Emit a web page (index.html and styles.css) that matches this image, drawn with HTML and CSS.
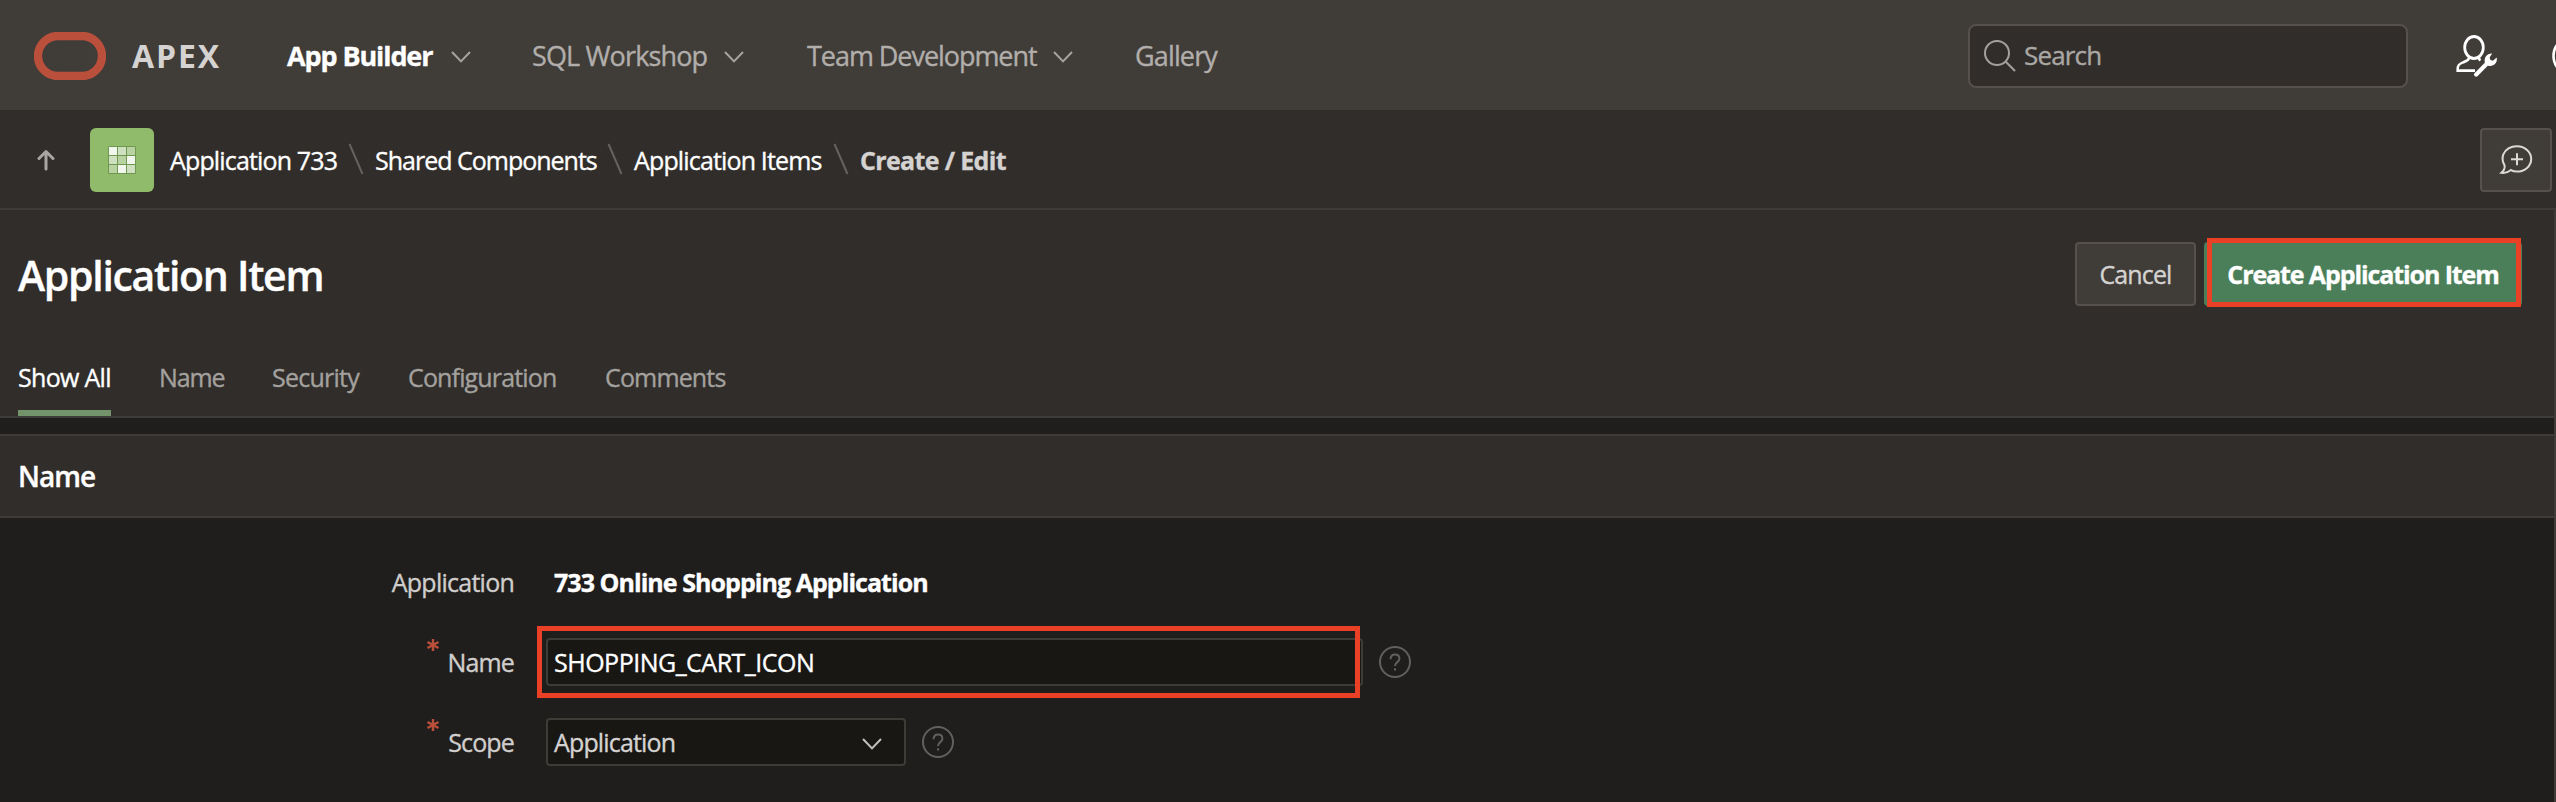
FILE: index.html
```
<!DOCTYPE html>
<html lang="en">
<head>
<meta charset="utf-8">
<title>Application Item</title>
<link rel="stylesheet" href="styles.css">
</head>
<body>
<header class="topbar">
  <svg class="logo" width="72" height="48" viewBox="0 0 72 48"><rect x="4" y="4" width="64" height="40" rx="20" fill="none" stroke="#ba4f3b" stroke-width="8.4"/></svg>
  <span class="brand">APEX</span>
  <nav class="menu">
    <a class="menu-item active m-builder"><span>App Builder</span><svg class="chev" width="20" height="12" viewBox="0 0 20 12"><path d="M1 1l9 9.4L19 1"/></svg></a>
    <a class="menu-item m-sql"><span>SQL Workshop</span><svg class="chev" width="20" height="12" viewBox="0 0 20 12"><path d="M1 1l9 9.4L19 1"/></svg></a>
    <a class="menu-item m-team"><span>Team Development</span><svg class="chev" width="20" height="12" viewBox="0 0 20 12"><path d="M1 1l9 9.4L19 1"/></svg></a>
    <a class="menu-item"><span>Gallery</span></a>
  </nav>
  <div class="search">
    <svg width="32" height="32" viewBox="0 0 32 32" fill="none" stroke="#a3a19e" stroke-width="2"><circle cx="13" cy="13" r="12"/><path d="M21.8 21.8L31 31"/></svg>
    <span>Search</span>
  </div>
  <svg class="admin" width="42" height="42" viewBox="0 0 42 42" fill="none" stroke="#fff">
    <ellipse cx="18" cy="12.500" rx="9.300" ry="11" stroke-width="2.800"/>
    <path d="M13.500 22c-.5 3.500-3.500 4.200-6.500 5.400-3.700 1.500-5.300 2.600-5.300 6V35.600H19M22.500 22c.2 1.500.7 2.500 2 3.400" stroke-width="2.600"/>
    <path d="M20.200 39.400L32 27.600" stroke-width="4.200" stroke-linecap="round"/>
    <path d="M36.200 18.400l-2.600 4.200.8 2.400 2.500.8 3.800-3.300c1.100 5.600-3 9.400-8.600 8.300l-3.200-3c-1.200-5.200 2-9.800 7.300-9.400z" fill="#fff" stroke="none"/>
  </svg>
  <svg class="help-edge" width="4" height="42" viewBox="0 0 4 42"><circle cx="21" cy="21" r="19.500" fill="none" stroke="#fff" stroke-width="2.600"/></svg>
</header>

<div class="crumbbar">
  <svg class="up" width="18" height="22" viewBox="0 0 18 22" fill="none" stroke="#a8a6a3" stroke-width="3" stroke-linecap="round" stroke-linejoin="round"><path d="M9 20V2.500M2 9.500l7-7 7 7"/></svg>
  <div class="app-icon">
    <svg width="28" height="28" viewBox="0 0 28 28"><rect width="28" height="28" rx="1.500" fill="#709750"/><g fill="#f2f7ee"><rect x="1" y="1" width="8" height="8"/><rect x="19" y="10" width="8" height="8"/><rect x="10" y="19" width="8" height="8"/></g><g fill="#cfe0c0"><rect x="10" y="1" width="8" height="8"/><rect x="1" y="10" width="8" height="8"/><rect x="19" y="19" width="8" height="8"/></g><g fill="#b8d3a1"><rect x="19" y="1" width="8" height="8"/><rect x="10" y="10" width="8" height="8"/><rect x="1" y="19" width="8" height="8"/></g></svg>
  </div>
  <span class="crumb c-app">Application 733</span>
  <svg class="sep" width="16" height="32" viewBox="0 0 16 32"><path d="M1.500 1l13 30"/></svg>
  <span class="crumb c-shared">Shared Components</span>
  <svg class="sep" width="16" height="32" viewBox="0 0 16 32"><path d="M1.500 1l13 30"/></svg>
  <span class="crumb c-items">Application Items</span>
  <svg class="sep" width="16" height="32" viewBox="0 0 16 32"><path d="M1.500 1l13 30"/></svg>
  <span class="crumb current">Create / Edit</span>
  <div class="feedback"><svg width="34" height="30" viewBox="0 0 34 30" fill="none" stroke="#dcdad7" stroke-width="2"><path d="M5.600 20.500C3.300 16.500 3 13 4.200 9.700A14.200 12.500 0 0 1 18 1.200a14.200 12.700 0 0 1 0 25.400c-2.300 0-4-.3-6-1.500-2.600 2.200-5.400 3.200-9.600 2.700 2.600-2.300 3.700-4.500 3.200-7.300zM18 8.200v12M12 14.200h12"/></svg></div>
</div>

<main class="page">
  <section class="title-region">
    <div class="title-row">
      <h1>Application Item</h1>
      <div class="button cancel">Cancel</div>
      <div class="button create"><span>Create Application Item</span><i class="mark mark-create"></i></div>
    </div>
    <nav class="tabs">
      <a class="tab selected t-all">Show All</a>
      <a class="tab t-name">Name</a>
      <a class="tab t-sec">Security</a>
      <a class="tab t-conf">Configuration</a>
      <a class="tab">Comments</a>
    </nav>
  </section>
  <section class="section">
    <h2>Name</h2>
    <div class="form">
      <div class="row">
        <label>Application</label>
        <strong class="value">733 Online Shopping Application</strong>
      </div>
      <div class="row">
        <label><svg class="req" width="14" height="14" viewBox="0 0 14 14"><path d="M7 1v12M1.500 4l11 6M12.500 4l-11 6"/></svg>Name</label>
        <div class="field text"><span>SHOPPING_CART_ICON</span><i class="mark mark-name"></i></div>
        <svg class="help" width="32" height="32" viewBox="0 0 32 32"><circle cx="16" cy="16" r="15"/><path d="M11.600 13.200c0-3 1.800-4.700 4.400-4.700s4.400 1.600 4.400 4.200c0 3.600-4.400 3.300-4.400 7.300M16 22.200v2.200"/></svg>
      </div>
      <div class="row">
        <label><svg class="req" width="14" height="14" viewBox="0 0 14 14"><path d="M7 1v12M1.500 4l11 6M12.500 4l-11 6"/></svg>Scope</label>
        <div class="field select"><span>Application</span><svg class="chev light" width="20" height="12" viewBox="0 0 20 12"><path d="M1 1l9 9.400L19 1"/></svg></div>
        <svg class="help" width="32" height="32" viewBox="0 0 32 32"><circle cx="16" cy="16" r="15"/><path d="M11.600 13.200c0-3 1.800-4.700 4.400-4.700s4.400 1.600 4.400 4.200c0 3.600-4.400 3.300-4.400 7.300M16 22.200v2.200"/></svg>
      </div>
    </div>
  </section>
</main>
</body>
</html>
```
FILE: styles.css
```
* { box-sizing: border-box; }
body {
  margin: 0;
  width: 2556px;
  height: 802px;
  overflow: hidden;
  background: #201e1c;
  color: #fff;
  font-family: "Open Sans", "Noto Sans", sans-serif;
  font-size: 25px;
  letter-spacing: -0.85px;
  white-space: nowrap;
  -webkit-text-stroke: 0.35px currentColor;
}
svg { display: block; flex: none; }

/* Top bar */
.topbar { display: flex; align-items: center; height: 110px; padding-left: 34px; background: #403c38; }
.logo { margin-top: 2px; }
.brand { width: 155px; margin-left: 26px; font-size: 32px; font-weight: 700; letter-spacing: 1.9px; color: #d5d3d1; -webkit-text-stroke: 0; }
.menu { display: flex; flex: 1; font-size: 27px; }
.menu-item { display: flex; align-items: center; justify-content: space-between; color: #b1aeab; }
.menu-item.active { color: #fff; font-weight: 700; letter-spacing: -1.1px; }
.m-builder { width: 184px; margin-right: 61px; }
.m-sql { width: 212px; margin-right: 63px; }
.m-team { width: 266px; margin-right: 62px; letter-spacing: -1.05px; }
.chev { fill: none; stroke: #a6a3a0; stroke-width: 2; margin-top: 4px; }
.chev.light { stroke: #c4c2c0; }
.search { display: flex; align-items: center; gap: 8px; width: 440px; height: 64px; margin-top: 2px; padding-left: 14px; border: 2px solid #56514c; border-radius: 8px; background: #312d2a; color: #aaa8a5; font-size: 26px; }
.search span { margin-top: -2px; }
.admin { margin: 2px 54px 0 48px; }
.help-edge { margin-top: 2px; }

/* Breadcrumb */
.crumbbar { display: flex; align-items: center; height: 100px; padding: 0 4px 0 37px; border-bottom: 2px solid #3f3b38; background: #312d2a; }
.up { margin-top: 2px; }
.app-icon { display: flex; align-items: center; justify-content: center; width: 64px; height: 64px; margin: 2px 16px 0 35px; border-radius: 6px; background: #8fbb6b; }
.crumb { margin-top: 1px; }
.c-app { width: 178px; }
.c-shared { width: 232px; letter-spacing: -1px; }
.c-items { width: 199px; }
.sep { margin-right: 11px; fill: none; stroke: #66625f; stroke-width: 2; }
.crumb.current { color: #d5d3d1; font-weight: 700; letter-spacing: -0.65px; }
.feedback { display: flex; align-items: center; justify-content: center; width: 72px; height: 64px; margin: 2px 0 0 auto; border: 2px solid #56514c; border-radius: 4px; background: #403c38; }

/* Title region */
.page { height: 592px; border-right: 2px solid #3f3b38; }
.title-region { height: 208px; padding-left: 18px; border-bottom: 2px solid #3f3b38; background: #312d2a; }
.title-row { display: flex; align-items: center; height: 128px; padding-right: 32px; }
h1 { flex: 1; margin: 1px 0 0; font-size: 41px; line-height: 56px; font-weight: 600; letter-spacing: -1.3px; }
.button { position: relative; display: flex; align-items: center; justify-content: center; height: 64px; border-radius: 4px; }
.cancel { width: 121px; margin-right: 8px; border: 2px solid #56514c; background: #403c38; color: #d5d3d1; }
.create { width: 318px; background: #4b7f5a; font-weight: 700; letter-spacing: -1.1px; }
.cancel, .create span { padding-bottom: 1px; }
.mark { position: absolute; border: 5px solid #ea4025; }
.mark-create { left: 3px; top: -4px; width: 314px; height: 69px; }
.tabs { display: flex; height: 78px; }
.tab { padding-top: 22px; color: #a3a19e; line-height: 34px; }
.selected { color: #fff; border-bottom: 6px solid #73936a; letter-spacing: -0.7px; }
.t-all { width: 93px; margin-right: 48px; }
.t-name { width: 113px; letter-spacing: -1.1px; }
.t-sec { width: 136px; letter-spacing: -0.75px; }
.t-conf { width: 197px; }

/* Form section */
.section { margin-top: 16px; }
h2 { height: 84px; margin: 0; padding-left: 18px; border: solid #3f3b38; border-width: 2px 0; background: #312d2a; font-size: 28px; line-height: 80px; font-weight: 600; letter-spacing: -1px; }
.form { display: grid; gap: 16px; padding-top: 32px; }
.row { display: flex; align-items: center; height: 64px; }
label { display: flex; align-items: center; justify-content: flex-end; width: 514px; margin-right: 32px; color: #d0cecc; }
.row:first-child label { letter-spacing: -0.75px; }
.value { padding-left: 8px; letter-spacing: -0.95px; }
.req { margin: -34px 8px 0 0; fill: none; stroke: #ba4f3b; stroke-width: 2.4; }
.field { position: relative; display: flex; align-items: center; height: 48px; padding-left: 6px; border: 2px solid #3f3c37; border-radius: 4px; background: #191714; }
.field.text { width: 817px; letter-spacing: -0.5px; }
.field.select { width: 360px; padding-right: 22px; justify-content: space-between; color: #d5d3d1; }
.mark-name { left: -11px; top: -14px; width: 823px; height: 72px; }
.help { margin-left: 16px; fill: none; stroke: #62605e; stroke-width: 2; }
```
